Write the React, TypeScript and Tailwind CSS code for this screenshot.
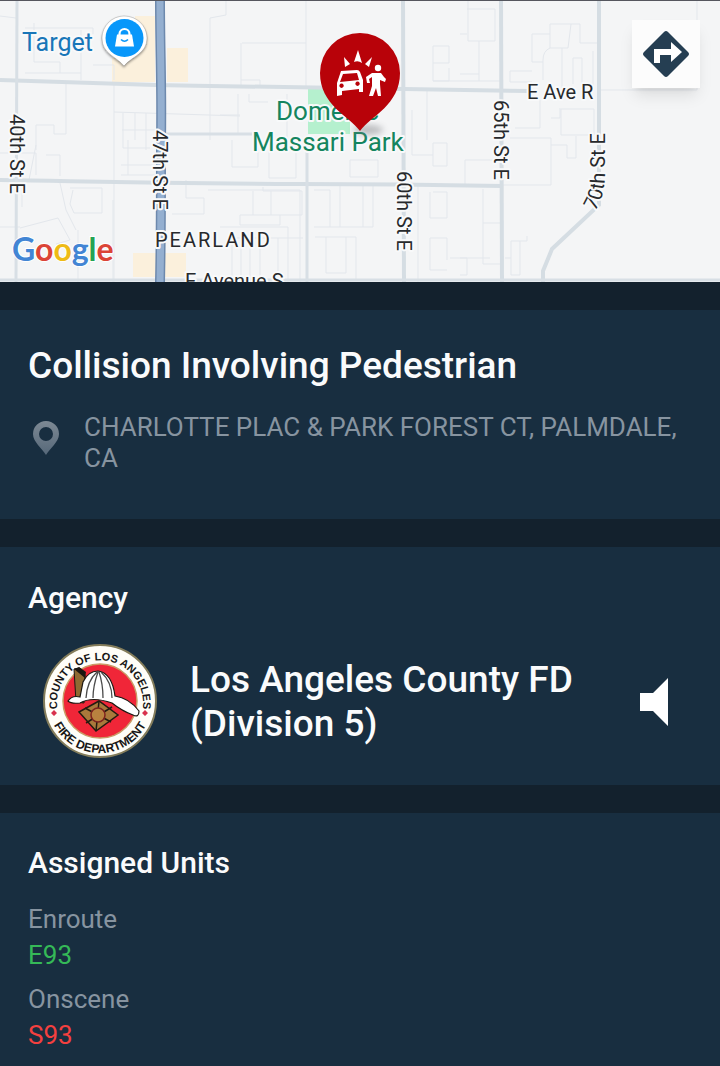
import type { ReactNode } from "react";

const minorStreets = [
  "M25 28H93V34M34 23V62M34 62H60V73M81 30V80M25 73H81M93 65H114V80M66 83V134H54V125H36V150",
  "M0 16L16 18M0 153H36V175M46 155H60V176M29 180L36 145M114 83V282M123 113V148H150M114 112L240 116",
  "M135 113V140M146 113V150M122 130H155M121 165H156M121 175H156M128 140V175",
  "M60 183L66 210L76 230M70 188H102V213H74L70 204L73 190M20 228L58 218L70 240L56 244M78 230V282M0 227H20M22 207V180M113 200V282",
  "M226 0V15L210 18V140M306 0V88M242 43H306M241 43V85M241 80H260V88M186 180V198H204V214H172M208 190H300V282",
  "M220 115H240M220 134H238V94M249 94V102H268M287 94V140M232 140V167H258V140M269 145V178H296V145",
  "M253 191V215M263 187V191H302V215H240V225H280V215M220 227H288V282M271 191V215M232 238H303M278 238V276M232 238V280M241 238V280M250 238V280M260 238V280",
  "M314 190H330V227M340 185V227M363 185V227M373 185V227M314 227H373M315 237H356V280M326 237V273H346V237M350 160H378V177H350Z",
  "M433 46H449V63H433M433 46V81H449V68M433 81H500M427 88V140M412 110V155H433",
  "M433 143H447V166H433V143M418 185V282M433 192H447V218H430V192M430 238H447V260M450 258H490M430 238V270H447",
  "M467 9H495V41H468V0M460 34H467M479 41V81M460 74H479M465 185V160H500M483 189V264H500M483 223H500",
  "M550 24H580V43H598M550 24V48H568L571 24M550 48Q543 51 543 60V80M532 34H550M532 34V62H543M510 71H532M510 71V82H532M562 48V88M573 58H582V88M593 51V88M573 58V84",
  "M540 100V128H515M510 138H551V185H503M551 118H560V108M561 109H594V135H561V109M551 145H567V158H576V136",
  "M511 241H527V236M511 241V275H520V241M505 258H511M460 258H467V275H460",
  "M697 0V90H600",
];

const mainRoads = [
  "M0 80C60 82 110 84 155 85C270 87 380 88 528 91",
  "M0 180C80 181 120 183 300 184C390 184 450 185 502 186",
  "M403 0L404 282",
  "M501 0L502 282",
  "M599 0V205L552 249L543 271V282",
];

const sideRoads = ["M17 0L16 282", "M160 134H252", "M307 140L307 282", "M0 280H720"];

function MapPin() {
  return (
    <g>
      <ellipse cx="368" cy="130" rx="15" ry="5" fill="#77777c" opacity=".45" filter="url(#soft)" />
      <path
        d="M360 131C349 116 320 105 320 73A40 40 0 0 1 400 73C400 105 371 116 360 131Z"
        fill="#b80209"
      />
      <g fill="#fff">
        <path d="M358 50L354 62Q358 60 362 63ZM344 57L345 67L350 64ZM372 57L365 64L369 67Z" />
        <path
          fillRule="evenodd"
          d="M341 71L357 70Q359 70 360 72L363 80V92H359V89L342 91V95L337 96V83ZM343 74L340 82L359 80L357 73ZM341.500 83.500A2.200 2.200 0 1 0 341.600 83.500ZM357.500 81.500A2.200 2.200 0 1 0 357.600 81.500Z"
        />
        <circle cx="378" cy="68" r="3.200" />
        <path d="M372 73H381L384 77L386 79L385 82L380 80V84L381 96H378L376 88L373 96H369L372 86V77L369 79L370 83H367L366 77Z" />
      </g>
    </g>
  );
}

function StoreMarker() {
  return (
    <g>
      <path
        d="M124 16C112 16 102 26 102 38C102 54 116 56 124 66C132 56 147 54 147 38C147 26 137 16 124 16Z"
        fill="#fff"
        stroke="#000"
        strokeOpacity=".18"
        filter="url(#lift)"
      />
      <circle cx="124.500" cy="38" r="19" fill="#0897fa" />
      <path d="M119.500 36V34A5 5 0 0 1 129.500 34V36" fill="none" stroke="#fff" strokeWidth="2.200" />
      <path d="M117 34.500H132L134 46.500H115Z" fill="#fff" />
      <path d="M121 39.500Q124.500 43 128 39.500" fill="none" stroke="#0897fa" strokeWidth="1.600" />
    </g>
  );
}

function AreaMap() {
  return (
    <svg viewBox="0 0 720 282" className="block w-full" role="img" aria-label="Incident map">
      <defs>
        <filter id="soft" x="-50%" y="-150%" width="200%" height="400%">
          <feGaussianBlur stdDeviation="3" />
        </filter>
        <filter id="lift" x="-20%" y="-20%" width="140%" height="150%">
          <feDropShadow dx="0" dy="1.500" stdDeviation="1.200" floodOpacity=".4" />
        </filter>
        <path id="curve70" d="M595 211Q605 196 605 172V110" />
      </defs>
      <rect width="720" height="282" fill="#f4f5f6" />
      <path d="M135 16H155V82H112V58H135ZM167 48H188V82H167ZM133 253H186V277H133Z" fill="#fbf0dc" />
      <path d="M308 88H350V134H308Z" fill="#b5f0ce" />
      <g fill="none" stroke="#e3e7ec" strokeWidth="1">
        {minorStreets.map((d) => (
          <path key={d} d={d} />
        ))}
      </g>
      <g fill="none" stroke="#d5dde3" strokeWidth="4">
        {mainRoads.map((d) => (
          <path key={d} d={d} />
        ))}
      </g>
      <g fill="none" stroke="#d8dfe5" strokeWidth="3">
        {sideRoads.map((d) => (
          <path key={d} d={d} />
        ))}
      </g>
      <path d="M160 0C160 50 162 90 161 140C161 200 161 240 160 282" fill="none" stroke="#6d89ad" strokeWidth="10" />
      <path d="M160 0C160 50 162 90 161 140C161 200 161 240 160 282" fill="none" stroke="#94afd0" strokeWidth="7" />
      <g
        fontFamily="Roboto, sans-serif"
        fontSize="20"
        fill="#27292c"
        stroke="#f8f9fa"
        strokeWidth="4"
        strokeLinejoin="round"
        paintOrder="stroke"
      >
        <text transform="translate(10 114) rotate(90)">40th St E</text>
        <text transform="translate(153 130) rotate(90)">47th St E</text>
        <text transform="translate(397 171) rotate(90)">60th St E</text>
        <text transform="translate(494 100) rotate(90)">65th St E</text>
        <text>
          <textPath href="#curve70">70th St E</textPath>
        </text>
        <text x="527" y="99">E Ave R</text>
        <text x="185" y="288">E Avenue S</text>
        <text x="155" y="247" className="tracking-[2px]">PEARLAND</text>
        <g fill="#14855f" fontSize="26">
          <text x="276" y="120">Domenic</text>
          <text x="252" y="151">Massari Park</text>
        </g>
        <text x="22" y="51" fontSize="25" fill="#1976b8">Target</text>
      </g>
      <text x="12" y="261" fontFamily="Lato, sans-serif" fontSize="32" fontWeight="700" stroke="#fff" strokeWidth="2" paintOrder="stroke">
        <tspan fill="#4285d4">G</tspan>
        <tspan fill="#db4437">o</tspan>
        <tspan fill="#eebb16">o</tspan>
        <tspan fill="#4285d4">g</tspan>
        <tspan fill="#24a353">l</tspan>
        <tspan fill="#db4437">e</tspan>
      </text>
      <StoreMarker />
      <MapPin />
      <path d="M0 .5H720" stroke="#55565e" />
    </svg>
  );
}

function AgencySeal() {
  return (
    <svg viewBox="0 0 116 116" className="size-29 shrink-0" role="img" aria-label="County of Los Angeles Fire Department">
      <defs>
        <path id="sealTop" d="M18 75A43 43 0 1 1 98 75" />
        <path id="sealBottom" d="M6 57A52 52 0 0 0 110 57" />
      </defs>
      <circle cx="58" cy="57" r="56" fill="#fffef8" stroke="#847d5b" strokeWidth="2" />
      <circle cx="58" cy="57" r="37" fill="#f02638" stroke="#ca9b65" strokeWidth="1.500" />
      <g fontFamily="Liberation Sans, sans-serif" fontWeight="700" fill="#171716" textAnchor="middle">
        <text fontSize="11">
          <textPath href="#sealTop" startOffset="50%">COUNTY OF LOS ANGELES</textPath>
        </text>
        <text fontSize="12">
          <textPath href="#sealBottom" startOffset="50%">FIRE DEPARTMENT</textPath>
        </text>
      </g>
      <path d="M12 66L15 69L12 72L9 69ZM103 66L106 69L103 72L100 69Z" fill="#d8314b" />
      <path d="M32 25L38 24L43 31L42 59L34 58Z" fill="#8f6b32" stroke="#1b1711" strokeWidth="1" />
      <path d="M32 25L37 23L44 28L43 34Z" fill="#1b1711" />
      <path
        d="M26 57Q30 51 38 53L41 38Q46 27 56 27Q70 29 73 52Q87 54 97 67Q97 74 91 71Q80 67 70 59Q50 52 38 59Q29 60 26 57Z"
        fill="#fff"
        stroke="#1b1711"
        strokeWidth="1.200"
      />
      <path
        d="M55 28Q45 37 44 54M56 28Q51 42 51 54M57 28Q61 40 61 54M59 28Q70 38 70 54"
        fill="none"
        stroke="#4b4b4b"
        strokeWidth="1.300"
      />
      <path d="M37 68L57 57L76 71L54 87Z" fill="#a9793b" stroke="#241b10" strokeWidth="1.500" />
      <path d="M43 64L69 78M70 63L44 79M57 57L54 87" stroke="#241b10" strokeWidth="1.500" />
      <circle cx="56" cy="71" r="7" fill="#b9823f" stroke="#7d221e" strokeWidth="1.500" />
    </svg>
  );
}

function Section({ children, className }: { children: ReactNode; className: string }) {
  return <section className={`border-t-28 border-[#13212d] bg-[#182e40] px-7 ${className}`}>{children}</section>;
}

export default function App() {
  return (
    <main className="flex min-h-screen flex-col bg-[#182e40] font-['Roboto',sans-serif] text-[#fafbfc]">
      <header className="relative">
        <AreaMap />
        <button
          type="button"
          aria-label="Directions"
          className="absolute top-5 right-5 flex size-17 items-center justify-center bg-[#fcfcfc] shadow-lg shadow-black/10"
        >
          <svg viewBox="0 0 48 48" className="size-12" aria-hidden="true">
            <path
              d="M22 2Q24 0 26 2L46 22Q48 24 46 26L26 46Q24 48 22 46L2 26Q0 24 2 22Z"
              fill="#253e52"
            />
            <path d="M12 33V19H29V12L40 22L29 32V25H18V33Z" fill="#fff" />
          </svg>
        </button>
      </header>

      <Section className="pt-8 pb-[45px]">
        <h1 className="text-[37px] leading-12 font-medium">Collision Involving Pedestrian</h1>
        <div className="mt-5 flex items-start gap-6 pt-0.5 text-[#8794a0]">
          <svg viewBox="0 0 28 36" className="mt-2 ml-1 h-9 w-7 shrink-0" aria-hidden="true">
            <defs>
              <linearGradient id="pinShade" x2="0" y2="1">
                <stop stopColor="#7d8994" />
                <stop offset="1" stopColor="#566879" />
              </linearGradient>
            </defs>
            <path
              d="M14 1A13 13 0 0 1 27 14C27 22 18 28 14 35C10 28 1 22 1 14A13 13 0 0 1 14 1ZM14 7A7 7 0 1 0 14 21A7 7 0 1 0 14 7Z"
              fill="url(#pinShade)"
              fillRule="evenodd"
            />
          </svg>
          <p className="text-[26px] leading-[31px]">CHARLOTTE PLAC &amp; PARK FOREST CT, PALMDALE, CA</p>
        </div>
      </Section>

      <Section className="pt-[33px] pb-[25px]">
        <h2 className="text-[30px] leading-9 font-medium">Agency</h2>
        <div className="mt-7 flex items-center pl-3.5">
          <AgencySeal />
          <p className="ml-8 flex-1 text-[37px] leading-11 font-medium">
            Los Angeles County FD (Division 5)
          </p>
          <button type="button" aria-label="Listen to agency" className="mr-6 shrink-0">
            <svg viewBox="0 0 28 48" className="h-12 w-7" aria-hidden="true">
              <path d="M0 15H13L28 0V48L13 33H0Z" fill="#fff" />
            </svg>
          </button>
        </div>
      </Section>

      <Section className="flex-1 pt-8 pb-3">
        <h2 className="text-[30px] leading-9 font-medium">Assigned Units</h2>
        <dl className="mt-5 text-[26px] leading-9">
          <dt className="text-[#8794a0]">Enroute</dt>
          <dd className="text-[#35b957]">E93</dd>
          <dt className="mt-2 text-[#8794a0]">Onscene</dt>
          <dd className="text-[#f4403f]">S93</dd>
        </dl>
      </Section>
    </main>
  );
}
